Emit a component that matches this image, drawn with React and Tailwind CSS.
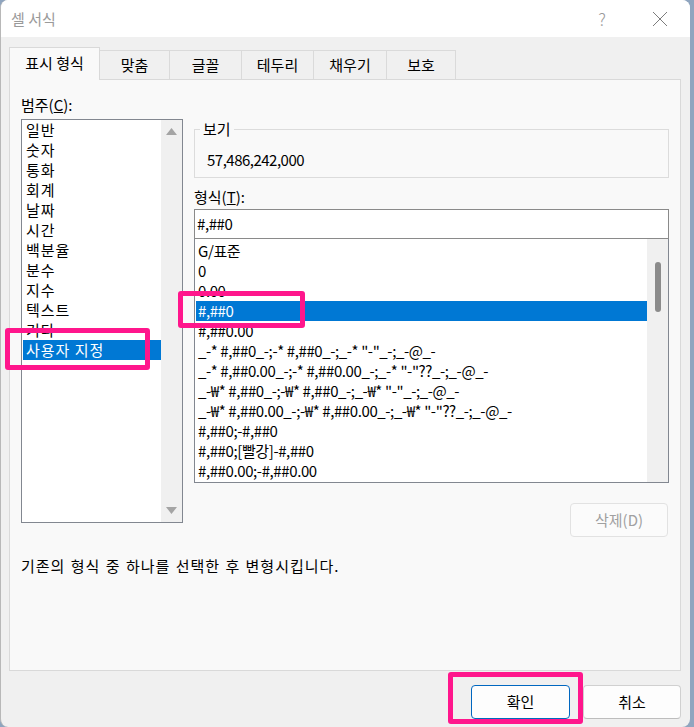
import React from "react";

const categories = [
  "일반",
  "숫자",
  "통화",
  "회계",
  "날짜",
  "시간",
  "백분율",
  "분수",
  "지수",
  "텍스트",
  "기타",
  "사용자 지정",
];

const formats = [
  "G/표준",
  "0",
  "0.00",
  "#,##0",
  "#,##0.00",
  '_-* #,##0_-;-* #,##0_-;_-* "-"_-;_-@_-',
  '_-* #,##0.00_-;-* #,##0.00_-;_-* "-"??_-;_-@_-',
  '_-₩* #,##0_-;-₩* #,##0_-;_-₩* "-"_-;_-@_-',
  '_-₩* #,##0.00_-;-₩* #,##0.00_-;_-₩* "-"??_-;_-@_-',
  "#,##0;-#,##0",
  "#,##0;[빨강]-#,##0",
  "#,##0.00;-#,##0.00",
];

const tabs = [
  { label: "표시 형식", w: "w-[91px]", active: true },
  { label: "맞춤", w: "w-[71px]" },
  { label: "글꼴", w: "w-[73px]" },
  { label: "테두리", w: "w-[73px]" },
  { label: "채우기", w: "w-[74px]" },
  { label: "보호", w: "w-[70px]" },
];

const Arrow = ({ down }) => (
  <svg width="11" height="7" viewBox="0 0 11 7" className="block">
    {down ? (
      <polygon points="0,0 11,0 5.5,7" fill="#a4a4a4" />
    ) : (
      <polygon points="0,7 11,7 5.5,0" fill="#a4a4a4" />
    )}
  </svg>
);

const CloseIcon = () => (
  <svg width="16" height="16" viewBox="0 0 16 16" className="block">
    <path d="M1 1L15 15M15 1L1 15" stroke="#7c7c7c" strokeWidth="1" fill="none" />
  </svg>
);

export default function App() {
  return (
    <div className="relative w-[694px] h-[727px] bg-[#8fa5bf] overflow-hidden font-['Noto_Sans_CJK_KR',sans-serif] text-[15px] text-black">
      <div className="w-[690px] h-[727px] bg-[#f0f0f0] rounded-[8px] overflow-hidden border-l border-[#b8b8b8] flex flex-col">
        {/* title bar */}
        <div className="h-[37px] bg-white flex items-center pl-[10px] shrink-0">
          <span className="text-[#9a9a9a] leading-5">셀 서식</span>
          <span className="ml-auto text-[#9a9a9a] text-[17px] font-light leading-5">?</span>
          <span className="ml-[46px] mr-[22px]">
            <CloseIcon />
          </span>
        </div>

        {/* tabs */}
        <div className="flex items-end pl-[8px] mt-[10px] h-[32px] shrink-0">
          {tabs.map((t) => (
            <div
              key={t.label}
              className={
                t.active
                  ? `${t.w} h-[33px] -mb-px relative z-10 bg-[#f9f9f9] border border-b-0 border-[#d9d9d9] flex items-center justify-center pb-[2px]`
                  : `${t.w} h-[29px] -ml-px bg-[#f0f0f0] border border-b-0 border-[#dadada] flex items-center justify-center`
              }
            >
              {t.label}
            </div>
          ))}
        </div>

        {/* panel */}
        <div className="ml-[8px] w-[672px] h-[592px] border border-[#d9d9d9] bg-[#f9f9f9] pl-[11px] pt-[15px] flex flex-col shrink-0">
          <div className="flex items-start">
            {/* category */}
            <div className="w-[162px]">
              <div className="leading-5">
                범주(<span className="underline">C</span>):
              </div>
              <div className="mt-[4px] h-[404px] border border-[#828790] bg-white flex">
                <div className="flex-1 pl-px tracking-[1px]">
                  {categories.map((c, i) => (
                    <div
                      key={c}
                      className={
                        i === categories.length - 1
                          ? "h-5 leading-5 pl-[3px] bg-[#0078d4] text-white"
                          : "h-5 leading-5 pl-[3px]"
                      }
                    >
                      {c}
                    </div>
                  ))}
                </div>
                <div className="w-[21px] bg-[#f0f0f0] flex flex-col items-center justify-between pt-[8px] pb-[8px]">
                  <Arrow />
                  <Arrow down />
                </div>
              </div>
            </div>

            {/* format side */}
            <div className="ml-[11px] w-[475px] flex flex-col">
              <fieldset className="mt-[25px] border border-[#dcdcdc] pl-[12px] pt-[12px] pb-[7px]">
                <legend className="-ml-[7px] px-[3px] leading-[18px]">보기</legend>
                <div className="leading-5 tracking-[-0.5px]">57,486,242,000</div>
              </fieldset>
              <div className="mt-[9px] leading-5">
                형식(<span className="underline">T</span>):
              </div>
              <div className="mt-[2px] h-[30px] border border-[#8a8a8a] bg-white flex items-center pl-[2px] tracking-[-0.4px]">
                #,##0
              </div>
              <div className="h-[244px] border-x border-b border-[#828790] bg-white flex">
                <div className="flex-1 pl-px pt-[2px] overflow-hidden whitespace-nowrap tracking-[-0.4px]">
                  {formats.map((f, i) => (
                    <div
                      key={f}
                      className={
                        i === 3
                          ? "h-5 leading-5 pl-[2px] bg-[#0078d4] text-white"
                          : "h-5 leading-5 pl-[2px]"
                      }
                    >
                      {f}
                    </div>
                  ))}
                </div>
                <div className="w-[21px] bg-[#f0f0f0] flex flex-col items-center pt-[23px]">
                  <div className="w-[6px] h-[50px] rounded-full bg-[#8b8b8b]" />
                </div>
              </div>
              <button className="mt-[20px] self-end mr-px w-[98px] h-[34px] rounded-[4px] border border-[#e2e2e2] bg-[#fbfbfb] text-[#a0a0a0] leading-5">
                삭제(D)
              </button>
            </div>
          </div>

          <div className="mt-[19px] leading-5 tracking-[1px] [word-spacing:1px]">
            기존의 형식 중 하나를 선택한 후 변형시킵니다.
          </div>
        </div>

        {/* buttons */}
        <div className="mt-[14px] flex justify-end gap-[13px] pr-[9px]">
          <button className="w-[99px] h-[34px] rounded-[4px] border border-[#0067c0] bg-[#fdfdfd] leading-5">
            확인
          </button>
          <button className="w-[98px] h-[34px] rounded-[4px] border border-[#d0d0d0] border-b-[#bdbdbd] bg-[#fdfdfd] leading-5">
            취소
          </button>
        </div>
      </div>

      {/* annotation boxes */}
      <div className="absolute left-[5px] top-[328px] w-[145px] h-[42px] border-[5px] border-[#ff168c] rounded-[3px]" />
      <div className="absolute left-[178px] top-[291px] w-[127px] h-[37px] border-[5px] border-[#ff168c] rounded-[3px]" />
      <div className="absolute left-[448px] top-[672px] w-[135px] h-[52px] border-[5px] border-[#ff168c] rounded-[3px]" />
    </div>
  );
}
